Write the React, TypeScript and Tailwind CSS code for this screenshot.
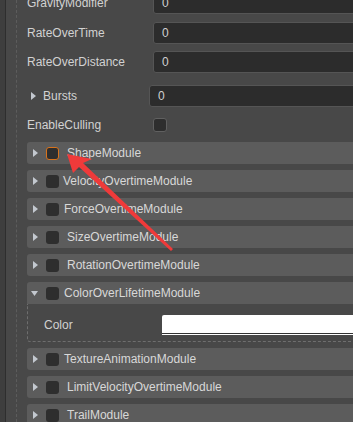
import React from "react";

type Mod = { name: string; tx: string; active?: boolean };

const TOP_MODULES: Mod[] = [
  { name: "ShapeModule", tx: "ml-[8px]", active: true },
  { name: "VelocityOvertimeModule", tx: "ml-[4px]" },
  { name: "ForceOvertimeModule", tx: "ml-[5px]" },
  { name: "SizeOvertimeModule", tx: "ml-[8px]" },
  { name: "RotationOvertimeModule", tx: "ml-[8px]" },
];

const BOTTOM_MODULES: Mod[] = [
  { name: "TextureAnimationModule", tx: "ml-[5px]" },
  { name: "LimitVelocityOvertimeModule", tx: "ml-[8px]" },
  { name: "TrailModule", tx: "ml-[8px]" },
];

function TriRight() {
  return (
    <svg width="5" height="8" viewBox="0 0 5 8" className="shrink-0">
      <polygon points="0,0 5,4 0,8" fill="#c3c8cf" />
    </svg>
  );
}

function TriDown() {
  return (
    <svg width="7" height="5" viewBox="0 0 7 5" className="shrink-0">
      <polygon points="0,0 7,0 3.5,5" fill="#c3c8cf" />
    </svg>
  );
}

function Box({ active }: { active?: boolean }) {
  return (
    <div
      className={
        active
          ? "w-[13px] h-[13px] rounded-[3px] bg-[#2e2e2e] border border-[#d8731c] shrink-0"
          : "w-[13px] h-[13px] rounded-[3px] bg-[#2e2e2e] shrink-0"
      }
    />
  );
}

function NumField({ left = "w-[126px]", label }: { left?: string; label: React.ReactNode }) {
  return (
    <div className="flex items-center h-[22px]">
      <div className={`${left} shrink-0 flex items-center text-[#d2d2d2]`}>{label}</div>
      <div className="flex-1 h-[22px] rounded-[3px] bg-[#2c2c2c] border border-[#555555] flex items-center pl-[8px] text-[#d0d0d0]">
        0
      </div>
    </div>
  );
}

function ModuleRow({ m }: { m: Mod }) {
  return (
    <div className="h-[22px] rounded-[3px] bg-[#5c5c5c] flex items-center pl-[6px]">
      <TriRight />
      <div className="ml-[8px]">
        <Box active={m.active} />
      </div>
      <span className={`${m.tx} text-[#d8d8d8]`}>{m.name}</span>
    </div>
  );
}

export default function App() {
  return (
    <div className="relative w-[353px] h-[422px] overflow-hidden bg-[#484848] font-['Liberation_Sans',Arial,sans-serif] text-[12px]">
      <div className="flex h-full">
        <div className="w-[5px] h-full bg-[#3e3e3e] shrink-0" />
        <div className="w-px h-full bg-[#2e2e2e] shrink-0" />
        <div className="w-[10px] shrink-0" />
        <div className="h-full border-l border-dashed border-[#5c5c5c] pl-[10px] w-[440px] shrink-0">
          <div className="flex flex-col mt-[-8px]">
            <NumField label="GravityModifier" />
            <div className="mt-[8px]">
              <NumField label="RateOverTime" />
            </div>
            <div className="mt-[7px]">
              <NumField label="RateOverDistance" />
            </div>
            <div className="mt-[12px]">
              <NumField
                left="w-[122px]"
                label={
                  <>
                    <span className="ml-[4px]">
                      <TriRight />
                    </span>
                    <span className="ml-[7px]">Bursts</span>
                  </>
                }
              />
            </div>
            <div className="mt-[7px] h-[22px] flex items-center">
              <div className="w-[126px] shrink-0 text-[#d2d2d2]">EnableCulling</div>
              <div className="w-[14px] h-[14px] rounded-[3px] bg-[#2e2e2e] border border-[#606060]" />
            </div>

            <div className="mt-[6px] flex flex-col gap-[6px]">
              {TOP_MODULES.map((m) => (
                <ModuleRow key={m.name} m={m} />
              ))}

              {/* expanded module */}
              <div className="flex flex-col">
                <div className="h-[22px] rounded-t-[3px] bg-[#5c5c5c] flex items-center pl-[4px]">
                  <TriDown />
                  <div className="ml-[8px]">
                    <Box />
                  </div>
                  <span className="ml-[5px] text-[#d8d8d8]">ColorOverLifetimeModule</span>
                </div>
                <div className="border border-t-0 border-dashed border-[#6e6e6e] rounded-b-[3px] pt-[11px] pb-[6px] flex">
                  <div className="w-[134px] pl-[16px] flex items-center text-[#d2d2d2]">Color</div>
                  <div className="flex-1 flex flex-col">
                    <div className="h-[18px] bg-white rounded-tl-[2px]" />
                    <div className="h-px bg-[#333333]" />
                    <div className="h-px bg-white" />
                  </div>
                </div>
              </div>

              {BOTTOM_MODULES.map((m) => (
                <ModuleRow key={m.name} m={m} />
              ))}
            </div>
          </div>
        </div>
      </div>

      {/* annotation arrow */}
      <svg className="absolute left-0 top-0 pointer-events-none" width="353" height="422">
        <polygon
          points="67,154 92,159 83,163 173,249 171,251 79,167 73,173"
          fill="#ef3a3a"
        />
      </svg>
    </div>
  );
}
